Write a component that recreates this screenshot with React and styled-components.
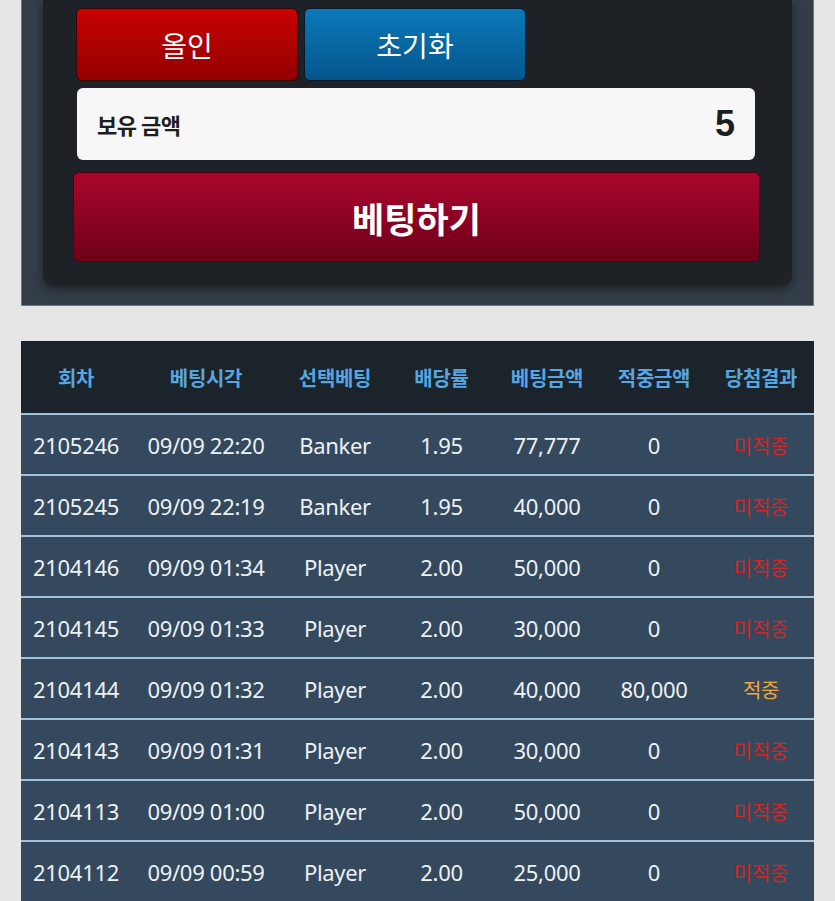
import React from "react";
import styled, { createGlobalStyle } from "styled-components";

const Global = createGlobalStyle`
    body {
        margin: 0;
        background: #e6e6e6;
        font-family: "Noto Sans", "Noto Sans CJK KR", sans-serif;
    }
`;

const Page = styled.div`
    padding: 0 21px 40px;
    display: flex;
    flex-direction: column;
    gap: 35px;
`;

const Outer = styled.section`
    background: #333d47;
    border: 1px solid #6d7882;
    border-top: none;
    height: 306px;
    padding: 0 21px;
    box-sizing: border-box;
`;

const Inner = styled.div`
    background: #1e2227;
    border-radius: 0 0 10px 10px;
    box-shadow: 0 4px 8px rgba(0, 0, 0, 0.45);
    padding: 8px 31px 23px 29px;
    display: flex;
    flex-direction: column;
    align-items: flex-start;
`;

const ButtonRow = styled.div`
    display: flex;
    gap: 6px;
    margin-left: 4px;
`;

const SmallButton = styled.button`
    width: 222px;
    height: 73px;
    border-radius: 6px;
    border: 1px solid ${(p) => (p.$tone === "red" ? "#3a0505" : "#081a2a")};
    background: ${(p) =>
        p.$tone === "red"
            ? "linear-gradient(#c80202, #930000)"
            : "linear-gradient(#0b79ba, #05558c)"};
    color: #fff;
    font-family: "Noto Sans CJK KR", sans-serif;
    font-size: 28px;
    padding: 0;
`;

const Holding = styled.div`
    margin: 7px 0 0 5px;
    width: 678px;
    height: 72px;
    background: #f7f7f7;
    border-radius: 6px;
    display: flex;
    align-items: center;
    justify-content: space-between;
    padding: 0 20px;
    box-sizing: border-box;
    color: #1e1e1e;
    font-weight: 700;
`;

const HoldLabel = styled.span`
    font-family: "Noto Sans CJK KR", sans-serif;
    font-size: 22px;
    letter-spacing: -0.5px;
`;

const HoldValue = styled.span`
    font-family: "Liberation Sans", sans-serif;
    font-size: 36px;
`;

const BetButton = styled.button`
    margin: 12px 0 0 1px;
    width: 687px;
    height: 90px;
    border-radius: 6px;
    border: 1px solid #4d0012;
    background: linear-gradient(#ab062d, #6d0019);
    color: #fff;
    font-family: "Noto Sans CJK KR", sans-serif;
    font-weight: 700;
    font-size: 35px;
    padding: 0;
`;

const Table = styled.table`
    width: 793px;
    table-layout: fixed;
    border-collapse: collapse;
    background: #34495d;
    color: #eef1f4;
`;

const Th = styled.th`
    background: #1b232b;
    height: 72px;
    padding: 0;
    color: #56a6e2;
    font-family: "Noto Sans CJK KR", sans-serif;
    font-size: 20px;
    font-weight: 700;
    letter-spacing: -0.3px;
    border-bottom: 2px solid #9fc3de;
`;

const Td = styled.td`
    height: 59px;
    padding: 0;
    text-align: center;
    font-size: 22px;
    letter-spacing: -0.3px;
    border-top: 2px solid #9fc3de;
    white-space: nowrap;
`;

const Result = styled.span`
    font-family: "Noto Sans CJK KR", sans-serif;
    font-size: 20px;
    color: ${(p) => (p.$win ? "#f0a83a" : "#d42525")};
`;

const widths = [110, 150, 108, 105, 106, 108, 106];
const headers = ["회차", "베팅시각", "선택베팅", "배당률", "베팅금액", "적중금액", "당첨결과"];

const rows = [
    ["2105246", "09/09 22:20", "Banker", "1.95", "77,777", "0", false],
    ["2105245", "09/09 22:19", "Banker", "1.95", "40,000", "0", false],
    ["2104146", "09/09 01:34", "Player", "2.00", "50,000", "0", false],
    ["2104145", "09/09 01:33", "Player", "2.00", "30,000", "0", false],
    ["2104144", "09/09 01:32", "Player", "2.00", "40,000", "80,000", true],
    ["2104143", "09/09 01:31", "Player", "2.00", "30,000", "0", false],
    ["2104113", "09/09 01:00", "Player", "2.00", "50,000", "0", false],
    ["2104112", "09/09 00:59", "Player", "2.00", "25,000", "0", false],
];

export default function App() {
    return (
        <>
            <Global />
            <Page>
                <Outer>
                    <Inner>
                        <ButtonRow>
                            <SmallButton $tone="red">올인</SmallButton>
                            <SmallButton $tone="blue">초기화</SmallButton>
                        </ButtonRow>
                        <Holding>
                            <HoldLabel>보유 금액</HoldLabel>
                            <HoldValue>5</HoldValue>
                        </Holding>
                        <BetButton>베팅하기</BetButton>
                    </Inner>
                </Outer>
                <Table>
                    <colgroup>
                        {widths.map((w, i) => (
                            <col key={i} style={{ width: w }} />
                        ))}
                    </colgroup>
                    <thead>
                        <tr>
                            {headers.map((h) => (
                                <Th key={h}>{h}</Th>
                            ))}
                        </tr>
                    </thead>
                    <tbody>
                        {rows.map((r) => (
                            <tr key={r[0]}>
                                {r.slice(0, 6).map((c, i) => (
                                    <Td key={i}>{c}</Td>
                                ))}
                                <Td>
                                    <Result $win={r[6]}>{r[6] ? "적중" : "미적중"}</Result>
                                </Td>
                            </tr>
                        ))}
                    </tbody>
                </Table>
            </Page>
        </>
    );
}
